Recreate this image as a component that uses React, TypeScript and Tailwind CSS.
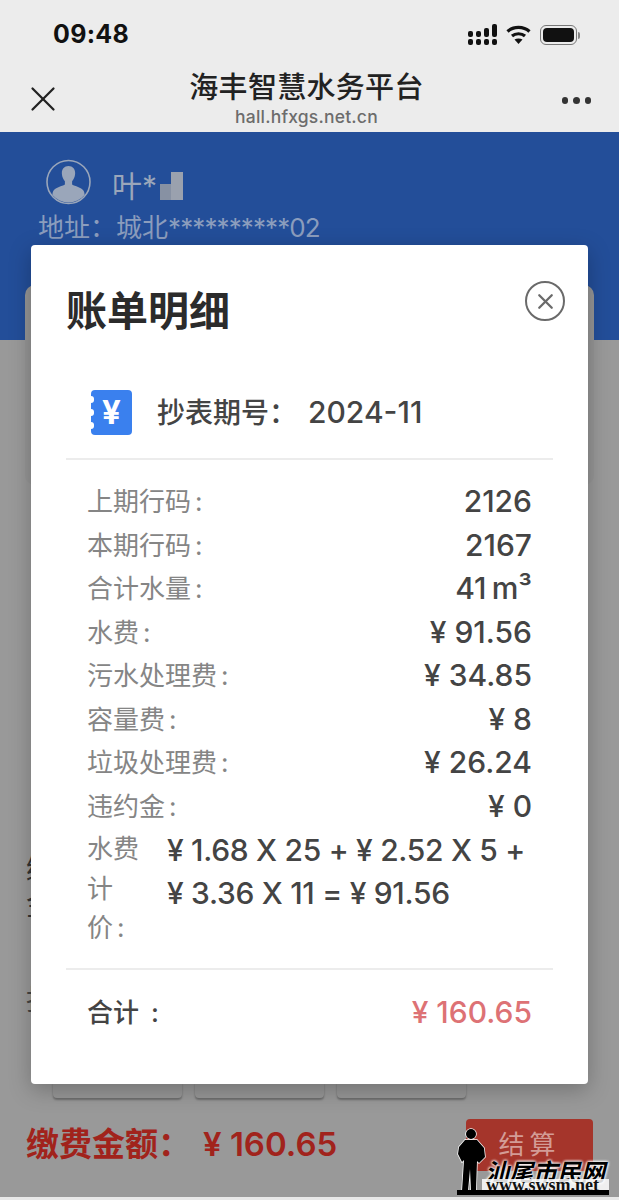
import { X } from 'lucide-react'

const cjk = "font-['Inter','Noto_Sans_CJK_SC',sans-serif]"

const rows = [
  { label: '上期行码', value: '2126' },
  { label: '本期行码', value: '2167' },
  { label: '合计水量', value: '41\u2009m³' },
  { label: '水费', value: '¥ 91.56' },
  { label: '污水处理费', value: '¥ 34.85' },
  { label: '容量费', value: '¥ 8' },
  { label: '垃圾处理费', value: '¥ 26.24' },
  { label: '违约金', value: '¥ 0' },
]

function StatusIcons() {
  return (
    <div className="flex items-center gap-[9px]">
      {/* signal */}
      <svg width="29" height="22" viewBox="0 0 29 22" fill="#111">
        <rect x="0" y="7" width="5" height="6" rx="2" />
        <rect x="0" y="15" width="5" height="6" rx="2" />
        <rect x="8" y="7" width="5" height="6" rx="2" />
        <rect x="8" y="15" width="5" height="6" rx="2" />
        <rect x="16" y="4" width="5" height="9" rx="2" />
        <rect x="16" y="15" width="5" height="6" rx="2" />
        <rect x="24" y="0" width="5" height="13" rx="2" />
        <rect x="24" y="15" width="5" height="6" rx="2" />
      </svg>
      {/* wifi */}
      <svg width="25" height="20" viewBox="0 0 25 20" fill="none" stroke="#111" strokeWidth="3.2">
        <path d="M1.500 6.500C7.500 1 17.500 1 23.500 6.500" />
        <path d="M6 11C9.500 8 15.500 8 19 11" />
        <path d="M12.500 19l-4-4.500c2.200-1.500 5.800-1.500 8 0z" fill="#111" stroke="none" />
      </svg>
      {/* battery */}
      <div className="flex items-center gap-[1px]">
        <div className="w-[37px] h-[20px] rounded-[6px] border border-[#777] p-[2px]">
          <div className="w-full h-full rounded-[4px] bg-[#111]" />
        </div>
        <div className="w-[2px] h-[7px] rounded-r bg-[#888]" />
      </div>
    </div>
  )
}

function BillIcon() {
  return (
    <div className="relative w-[41px] h-[45px] rounded-[4px] bg-[#3a80ee] flex items-center justify-center text-[33px] leading-none font-bold text-white">
      ¥
      {/* scalloped left edge */}
      <span className="absolute -left-[3px] top-[6px] w-[6px] h-[7px] rounded-full bg-white" />
      <span className="absolute -left-[3px] top-[19px] w-[6px] h-[7px] rounded-full bg-white" />
      <span className="absolute -left-[3px] top-[32px] w-[6px] h-[7px] rounded-full bg-white" />
    </div>
  )
}

function Watermark() {
  return (
    <div className="absolute right-[10px] bottom-[3px] w-[152px] h-[72px]">
      <svg className="absolute left-0 top-[3px]" width="30" height="63" viewBox="0 0 30 63">
        <g fill="#000" stroke="#fff" strokeWidth="1.500" paintOrder="stroke">
          <circle cx="14" cy="6" r="5" />
          <path d="M8 12h12l7 8 1 9-6 6-2-2-1 30h-5l-1-22-2 22H5l2-31-2 2-4-8 1-7z" />
        </g>
      </svg>
      <div className="absolute left-[28px] top-[33px] whitespace-nowrap text-[24px] leading-[26px] font-bold italic text-black font-['Noto_Sans_CJK_SC',sans-serif] [text-shadow:0_0_3px_#fff,0_0_3px_#fff,0_0_3px_#fff]">
        汕尾市民网
      </div>
      <div className="absolute left-[25px] right-0 bottom-[6px] h-[12px] bg-[#ffffffd8] whitespace-nowrap text-[18px] leading-[12px] font-bold text-[#111] font-['Liberation_Serif',serif] pl-[4px]">
        www.swsm.net
      </div>
      <div className="absolute left-0 right-0 bottom-[2px] h-[5px] bg-black" />
    </div>
  )
}

export default function App() {
  return (
    <div className={`relative w-[619px] h-[1200px] overflow-hidden flex flex-col bg-[#999999] ${cjk}`}>
      {/* WeChat top bar */}
      <header className="h-[132px] shrink-0 bg-[#ececec] flex flex-col">
        <div className="h-[66px] pr-[39px] pl-[53px] pt-[4px] flex items-center justify-between">
          <span className="text-[25px] font-bold text-[#111] tracking-[0.3px]">09:48</span>
          <StatusIcons />
        </div>
        <div className="flex-1 pl-[22px] pr-[28px] grid grid-cols-[1fr_auto_1fr] items-center">
          <X className="w-[42px] h-[42px] text-[#222]" strokeWidth={1.300} />
          <div className="flex flex-col items-center -mt-[5px]">
            <div className="text-[29px] leading-[40px] font-medium text-[#222] tracking-[0.300px]">海丰智慧水务平台</div>
            <div className="text-[17.500px] leading-[18px] font-medium text-[#6c6c6c] tracking-[0.200px]">hall.hfxgs.net.cn</div>
          </div>
          <div className="flex gap-[5px] pt-[3px] justify-self-end">
            <span className="w-[6.500px] h-[6.500px] rounded-full bg-[#333]" />
            <span className="w-[6.500px] h-[6.500px] rounded-full bg-[#333]" />
            <span className="w-[6.500px] h-[6.500px] rounded-full bg-[#333]" />
          </div>
        </div>
      </header>

      {/* Blue account header, dimmed */}
      <section className="h-[208px] shrink-0 bg-[#234e99] pt-[23px] px-[38px] text-[#8b9dbd]">
        <div className="flex items-center gap-[20px] pl-[8px]">
          <svg width="46" height="54" viewBox="0 0 46 54" className="shrink-0">
            <circle cx="22.500" cy="27" r="21.500" fill="none" stroke="#9aa6ba" strokeWidth="1.600" />
            <path d="M22.500 11c4.500 0 7 3.500 6.600 8-.2 3-1.500 5.500-3 7.200v3.300c3 1.800 9 2.600 11.500 6.300.7 1.200 1 2.600 1 4.200a21 21 0 0 1-32.200 0c0-1.600.3-3 1-4.200 2.500-3.700 8.500-4.500 11.500-6.300v-3.300c-1.500-1.700-2.800-4.200-3-7.200-.4-4.500 2.100-8 6.600-8z" fill="#9aa6ba" />
          </svg>
          <div className="flex items-center text-[30px] leading-none text-[#9aa6ba] pt-[8px]">
            <span>叶*</span>
            <span className="w-[24px] h-[28px] ml-[3px] flex items-end">
              <span className="w-[11px] h-[16px] bg-[#8791a3]" />
              <span className="w-[12px] h-[28px] bg-[#9aa1ae]" />
            </span>
          </div>
        </div>
        <div className="text-[26px] leading-[32px] mt-[3px] whitespace-nowrap">
          地址：城北<span className="tracking-[-0.900px]">**********02</span>
        </div>
      </section>

      {/* Dimmed page content behind the dialog */}
      <main className="relative flex-1 flex flex-col justify-end">
        <div className="absolute left-[25px] right-[25px] -top-[55px] h-[200px] rounded-[10px] bg-[#959595]" />
        <div className="absolute left-[26px] top-[510px] text-[30px] leading-[36px] text-[#333]">
          缴费
          <br />
          金额
        </div>
        <div className="absolute left-[26px] top-[645px] text-[28px] leading-[30px] text-[#444]">抄表</div>
        <div className="flex gap-[13px] pl-[53px] mb-[21px]">
          <div className="w-[129px] h-[16px] rounded-b-[4px] bg-[#979797] shadow-[0_2px_2px_#6d6d6d]" />
          <div className="w-[129px] h-[16px] rounded-b-[4px] bg-[#979797] shadow-[0_2px_2px_#6d6d6d]" />
          <div className="w-[129px] h-[16px] rounded-b-[4px] bg-[#979797] shadow-[0_2px_2px_#6d6d6d]" />
        </div>
        <div className="flex items-start justify-between px-[26px] h-[78px]">
          <div className="text-[33px] leading-[50px] font-bold text-[#a1231c] whitespace-nowrap">
            缴费金额：<span className="ml-[12px] font-semibold">¥ 160.65</span>
          </div>
          <div className="w-[127px] h-[52px] rounded-t-[4px] bg-[#a5352b] pt-[6px] text-center text-[26px] leading-[40px] text-[#d39c96] tracking-[5px]">
            结算
          </div>
        </div>
      </main>
      <div className="h-[3px] shrink-0 bg-[#e8e8e8]" />

      {/* Bill detail dialog */}
      <div className="absolute left-[31px] top-[245px] w-[557px] h-[839px] rounded-[4px] bg-white shadow-[0_6px_22px_rgba(0,0,0,0.25)] px-[35px] flex flex-col">
        <div className="relative h-[130px] shrink-0 pt-[41px]">
          <h1 className="text-[41px] leading-[50px] font-semibold text-[#2b2b2b]">账单明细</h1>
          <div className="absolute right-[-12px] top-[36px] w-[40px] h-[40px] rounded-full border-[2.500px] border-[#6a6a6a] flex items-center justify-center">
            <X className="w-[25px] h-[25px] text-[#6a6a6a]" strokeWidth={2.200} />
          </div>
        </div>

        <div className="h-[85px] shrink-0 border-b-2 border-[#ececec] pl-[25px] pb-[9px] flex items-center gap-[25px]">
          <BillIcon />
          <div className="text-[28px] font-medium text-[#444444] whitespace-nowrap">
            抄表期号：<span className="ml-[11px] text-[30px]">2024-11</span>
          </div>
        </div>

        <dl className="pt-[20px] px-[21px] flex flex-col">
          {rows.map(row => (
            <div key={row.label} className="h-[43.500px] flex items-center justify-between">
              <dt className="text-[26px] text-[#858585]">
                {row.label}
                <span className="ml-[4px]">:</span>
              </dt>
              <dd className="text-[30px] font-medium text-[#444444]">{row.value}</dd>
            </div>
          ))}
          <div className="flex mt-[1px]">
            <dt className="w-[80px] shrink-0 text-[26px] leading-[39.500px] text-[#858585]">
              水费
              <br />
              计
              <br />
              价<span className="ml-[4px]">:</span>
            </dt>
            <dd className="text-[30px] leading-[43px] tracking-[-0.300px] font-medium text-[#444444] whitespace-nowrap">
              ¥ 1.68 X 25 + ¥ 2.52 X 5 +
              <br />
              ¥ 3.36 X 11 = ¥ 91.56
            </dd>
          </div>
        </dl>

        <div className="mt-[20px] h-[87px] border-t-2 border-[#ececec] px-[21px] flex items-center justify-between">
          <span className="text-[26px] font-medium text-[#444444]">
            合计<span className="ml-[12px]">:</span>
          </span>
          <span className="text-[30px] font-medium text-[#dd7275]">¥ 160.65</span>
        </div>
      </div>

      <Watermark />
    </div>
  )
}
